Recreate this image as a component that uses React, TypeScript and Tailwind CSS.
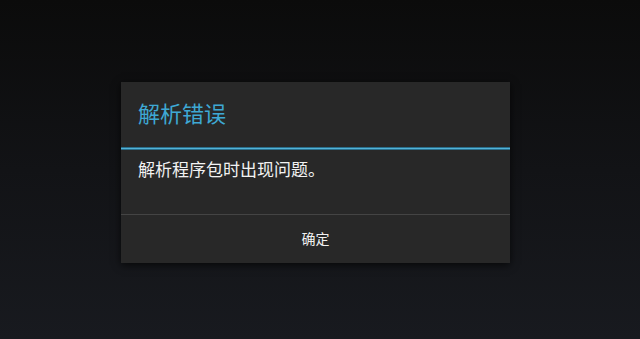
export default function App() {
  return (
    <div
      className="w-[640px] h-[339px] bg-gradient-to-b from-[#0b0b0b] via-[#121316] to-[#181a1f] pl-[121px] pt-[82px]"
      style={{ fontFamily: '"Roboto", "Noto Sans CJK SC", sans-serif' }}
    >
      <div className="w-[389px] bg-[#282828] shadow-[0_2px_8px_rgba(0,0,0,0.7)] flex flex-col">
        {/* title */}
        <div className="h-[65px] flex items-center px-[17px] text-[22px] text-[#3ea8d4]">
          解析错误
        </div>
        <div className="h-[3px] bg-[#52b2d8] border-y border-[#2a6f8c]" />
        {/* message */}
        <div className="h-[64px] px-[17px] pt-[8px] text-[17px] leading-[24px] text-[#f2f2f2]">
          解析程序包时出现问题。
        </div>
        <div className="h-px bg-[#444444]" />
        {/* button */}
        <button className="h-[48px] flex items-center justify-center text-[14px] text-[#f0f0f0]">
          确定
        </button>
      </div>
    </div>
  );
}
